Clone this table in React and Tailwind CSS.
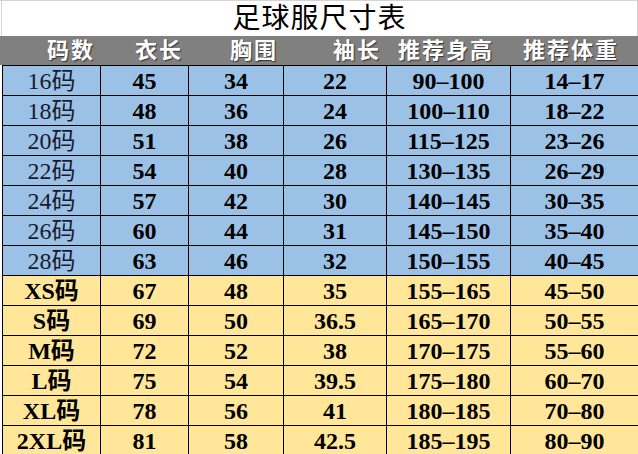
import React from 'react';

const rows = [
  ['16码', '45', '34', '22', '90–100', '14–17', 'blue'],
  ['18码', '48', '36', '24', '100–110', '18–22', 'blue'],
  ['20码', '51', '38', '26', '115–125', '23–26', 'blue'],
  ['22码', '54', '40', '28', '130–135', '26–29', 'blue'],
  ['24码', '57', '42', '30', '140–145', '30–35', 'blue'],
  ['26码', '60', '44', '31', '145–150', '35–40', 'blue'],
  ['28码', '63', '46', '32', '150–155', '40–45', 'blue'],
  ['XS码', '67', '48', '35', '155–165', '45–50', 'yellow'],
  ['S码', '69', '50', '36.5', '165–170', '50–55', 'yellow'],
  ['M码', '72', '52', '38', '170–175', '55–60', 'yellow'],
  ['L码', '75', '54', '39.5', '175–180', '60–70', 'yellow'],
  ['XL码', '78', '56', '41', '180–185', '70–80', 'yellow'],
  ['2XL码', '81', '58', '42.5', '185–195', '80–90', 'yellow'],
];

const cols = 'grid grid-cols-[98px_88px_95px_103px_124px_128px]';

const App = () => {
  return (
    <div className="w-[638px] h-[454px] overflow-hidden bg-white font-['Liberation_Serif','Noto_Sans_CJK_SC',serif]">
      {/* Title */}
      <div className="border-t border-[#d4d4d4] pl-[1px]">
        <div className="h-[35px] border-l border-r border-[#d4d4d4] flex items-center justify-center">
          <h1 className="text-[28px] leading-none text-black tracking-[1px] font-normal">足球服尺寸表</h1>
        </div>
      </div>

      {/* Header */}
      <div className="bg-[#808080] pl-[2px]">
        <div className={`${cols} h-[29px] text-white text-[22px] leading-[29px] font-bold tracking-[2px] [text-shadow:1px_1px_1px_#333]`}>
          <div className="pl-[45px]">码数</div>
          <div className="pl-[35px]">衣长</div>
          <div className="pl-[42px]">胸围</div>
          <div className="pl-[50px]">袖长</div>
          <div className="pl-[12px]">推荐身高</div>
          <div className="pl-[13px]">推荐体重</div>
        </div>
      </div>

      {/* Body */}
      <div className="ml-[2px] border-t border-l border-black">
        {rows.map((r) => (
          <div
            key={r[0]}
            className={`${cols} h-[30px] text-[24px] leading-none text-black ${r[6] === 'blue' ? 'bg-[#9bc2e6]' : 'bg-[#ffe699]'}`}
          >
            {r.slice(0, 6).map((v, i) => (
              <div
                key={i}
                className={`flex items-center justify-center border-r border-b border-black ${
                  i === 0 && r[6] === 'blue' ? 'font-normal text-[#1a1a2e]' : 'font-bold'
                }`}
              >
                {v}
              </div>
            ))}
          </div>
        ))}
      </div>
    </div>
  );
};

export default App;
